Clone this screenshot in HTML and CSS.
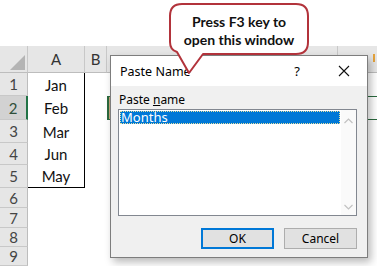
FILE: index.html
```html
<!DOCTYPE html>
<html>
<head>
<meta charset="utf-8">
<link rel="stylesheet" href="styles.css">
</head>
<body>
<div class="screen">
  <div class="sheet">
    <div class="corner"><span class="tri"></span></div>
    <div class="colhead">A</div>
    <div class="colhead">B</div>
    <div class="colhead">C</div>
    <div class="colhead last"><span class="tick"></span></div>

    <div class="rowhead">1</div><div class="cell a">Jan</div><div class="cell"></div><div class="cell rest"></div>
    <div class="rowhead sel">2</div><div class="cell a">Feb</div><div class="cell"></div><div class="cell rest active"></div>
    <div class="rowhead">3</div><div class="cell a">Mar</div><div class="cell"></div><div class="cell rest"></div>
    <div class="rowhead">4</div><div class="cell a">Jun</div><div class="cell"></div><div class="cell rest"></div>
    <div class="rowhead">5</div><div class="cell a lastrow">May</div><div class="cell"></div><div class="cell rest"></div>
    <div class="rowhead">6</div><div class="cell"></div><div class="cell"></div><div class="cell rest"></div>
    <div class="rowhead">7</div><div class="cell"></div><div class="cell"></div><div class="cell rest"></div>
    <div class="rowhead">8</div><div class="cell"></div><div class="cell"></div><div class="cell rest"></div>
    <div class="rowhead">9</div><div class="cell"></div><div class="cell"></div><div class="cell rest"></div>
  </div>

  <div class="dialog">
    <div class="titlebar">
      <span class="title">Paste Name</span>
      <span class="help">?</span>
      <span class="close">
        <svg width="12" height="12" viewBox="0 0 12 12"><path d="M1 1 L11 11 M11 1 L1 11" stroke="#111" stroke-width="1.1" fill="none"/></svg>
      </span>
    </div>
    <div class="dbody">
      <div class="label">Paste <u>n</u>ame</div>
      <div class="listbox">
        <div class="items">
          <div class="item">Months</div>
        </div>
        <div class="scroll">
          <svg width="9" height="6" viewBox="0 0 9 6"><path d="M0.5 5 L4.5 1 L8.5 5" stroke="#c2c2c2" stroke-width="1.2" fill="none"/></svg>
          <svg width="9" height="6" viewBox="0 0 9 6"><path d="M0.5 1 L4.5 5 L8.5 1" stroke="#c2c2c2" stroke-width="1.2" fill="none"/></svg>
        </div>
      </div>
      <div class="buttons">
        <div class="btn ok">OK</div>
        <div class="btn">Cancel</div>
      </div>
    </div>
  </div>

  <div class="bubble">
    <svg class="bubble-shape" width="377" height="80" viewBox="0 0 377 80">
      <path d="M182 4 H296 Q308 4 308 16 V42 Q308 54 296 54 H203 L189 73 L177 52 Q170 50 170 42 V16 Q170 4 182 4 Z" fill="#fff" stroke="#b2333b" stroke-width="2" stroke-linejoin="round"/>
    </svg>
    <div class="bubble-text">Press F3 key to<br>open this window</div>
  </div>
</div>
</body>
</html>
```
FILE: styles.css
```css
html, body {
  margin: 0;
  padding: 0;
  background: #fff;
}

.screen {
  position: relative;
  width: 377px;
  height: 266px;
  overflow: hidden;
  background: #fff;
  padding-top: 46px;
  box-sizing: border-box;
}

.sheet {
  display: grid;
  grid-template-columns: 28px 57px 22px 231px 1fr;
  grid-template-rows: 27px 23px 24px 23px 22px 23px 20px 20px 19px 19px;
  font-family: Lato, "Open Sans", sans-serif;
  font-size: 15px;
  color: #222;
}

.corner, .colhead {
  background: #e6e6e6;
  border-bottom: 1px solid #bdbdbd;
  border-right: 1px solid #c8c8c8;
  box-sizing: border-box;
  position: relative;
}

.colhead {
  display: flex;
  align-items: center;
  justify-content: center;
  color: #333;
  font-size: 15px;
}

.colhead.last {
  border-right: none;
}

.tri {
  position: absolute;
  right: 2px;
  bottom: 2px;
  width: 0;
  height: 0;
  border-left: 15px solid transparent;
  border-bottom: 15px solid #b4b4b4;
}

.tick {
  position: absolute;
  right: 2px;
  bottom: 10px;
  width: 2px;
  height: 8px;
  background: #e5a33c;
}

.rowhead {
  background: #e6e6e6;
  border-bottom: 1px solid #c8c8c8;
  border-right: 1px solid #bdbdbd;
  box-sizing: border-box;
  display: flex;
  align-items: center;
  justify-content: center;
  color: #444;
  font-size: 15px;
}

.rowhead.sel {
  background: #d2d2d2;
  border-right: 2px solid #217346;
  color: #2f4f3a;
}

.cell {
  box-sizing: border-box;
  grid-column: auto;
}

.cell.rest {
  grid-column: span 2;
}

.cell.a {
  border-right: 1px solid #000;
  display: flex;
  align-items: center;
  justify-content: center;
  color: #111;
}

.cell.a.lastrow {
  border-bottom: 1px solid #000;
}

.cell.active {
  border-left: 2px solid #2a6a3e;
  border-top: 1px solid #2a6a3e;
  border-bottom: 1px solid #2a6a3e;
  background: linear-gradient(to right, #c7a77d 2px, transparent 2px);
}

/* Dialog */
.dialog {
  position: absolute;
  left: 110px;
  top: 55px;
  width: 258px;
  height: 203px;
  box-sizing: border-box;
  border: 1px solid #7d7d7d;
  background: #f0f0f0;
  box-shadow: 3px 4px 8px rgba(0, 0, 0, 0.28);
  display: flex;
  flex-direction: column;
  font-family: "Noto Sans", "Open Sans", sans-serif;
  font-size: 12px;
  color: #000;
}

.titlebar {
  height: 30px;
  background: #fff;
  display: flex;
  align-items: center;
  flex: none;
}

.title {
  flex: 1;
  padding-left: 9px;
  font-size: 12.5px;
}

.help {
  width: 46px;
  text-align: center;
  font-size: 13px;
}

.close {
  width: 47px;
  display: flex;
  justify-content: center;
  align-items: center;
}

.dbody {
  flex: 1;
  display: flex;
  flex-direction: column;
  padding: 6px 10px 8px 7px;
}

.label {
  height: 16px;
  line-height: 16px;
  margin-bottom: 1px;
  padding-left: 1px;
}

.listbox {
  height: 107px;
  box-sizing: border-box;
  border: 1px solid #828790;
  background: #fff;
  display: flex;
}

.items {
  flex: 1;
  padding: 1px;
}

.item {
  height: 13px;
  line-height: 13px;
  background: #0078d7;
  color: #fff;
  font-size: 13px;
  padding-left: 1px;
  outline: 1px dotted #e8e0a0;
  outline-offset: -1px;
}

.scroll {
  width: 15px;
  background: #fafafa;
  display: flex;
  flex-direction: column;
  justify-content: space-between;
  align-items: center;
  padding: 8px 0 5px;
}

.buttons {
  margin-top: 12px;
  display: flex;
  justify-content: flex-end;
  gap: 10px;
  padding-right: 0;
}

.btn {
  width: 73px;
  height: 21px;
  box-sizing: border-box;
  border: 1px solid #adadad;
  background: #e1e1e1;
  display: flex;
  align-items: center;
  justify-content: center;
  font-size: 12px;
}

.btn.ok {
  border: 2px solid #0078d7;
}

/* Callout */
.bubble {
  position: absolute;
  left: 0;
  top: 0;
  width: 377px;
  height: 80px;
  pointer-events: none;
}

.bubble-shape {
  position: absolute;
  left: 0;
  top: 0;
}

.bubble-text {
  position: absolute;
  left: 170px;
  top: 13px;
  width: 138px;
  text-align: center;
  font-family: Lato, "Open Sans", sans-serif;
  font-weight: bold;
  font-size: 14px;
  line-height: 18px;
  color: #111;
}
```
